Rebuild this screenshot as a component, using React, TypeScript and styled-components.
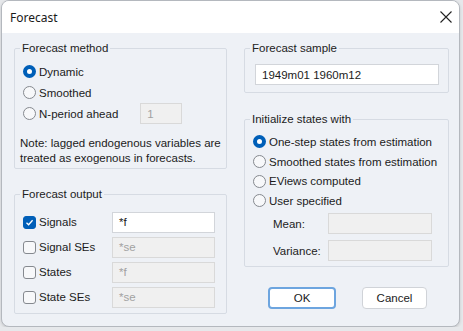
import styled, { createGlobalStyle } from 'styled-components';

const GlobalStyle = createGlobalStyle`
  html, body {
    margin: 0;
    padding: 0;
    background: #e6e8eb;
  }
  body {
    font-family: 'Liberation Sans', Arial, sans-serif;
    font-size: 11.5px;
    color: #1b1b1b;
  }
`;

const RadioOption: React.FC<{ label: string; checked?: boolean }> = ({ label, checked }) => (
  <RadioLabel>
    <RadioDot $checked={checked} />
    <span>{label}</span>
  </RadioLabel>
);

const CheckOption: React.FC<{ label: string; checked?: boolean }> = ({ label, checked }) => (
  <RadioLabel>
    <CheckBox $checked={checked}>
      {checked && (
        <svg width="9" height="9" viewBox="0 0 9 9">
          <path d="M1.5 4.8 L3.6 6.8 L7.6 2.2" fill="none" stroke="#fff" strokeWidth="1.3" />
        </svg>
      )}
    </CheckBox>
    <span>{label}</span>
  </RadioLabel>
);

export default function App() {
  return (
    <>
      <GlobalStyle />
      <Window>
        <TitleBar>
          <Title>Forecast</Title>
          <svg width="12" height="12" viewBox="0 0 12 12">
            <path d="M0.5 0.5 L11.5 11.5 M11.5 0.5 L0.5 11.5" stroke="#222" strokeWidth="1.1" />
          </svg>
        </TitleBar>
        <Body>
          <Column $width={213}>
            <Group $bottom={2}>
              <Legend>Forecast method</Legend>
              <Stack $top={5}>
                <OptionRow><RadioOption label="Dynamic" checked /></OptionRow>
                <OptionRow><RadioOption label="Smoothed" /></OptionRow>
                <OptionRow>
                  <RadioOption label="N-period ahead" />
                  <TextBox $disabled $width={42} $left={22}>1</TextBox>
                </OptionRow>
              </Stack>
              <Note>
                Note: lagged endogenous variables are
                <br />
                treated as exogenous in forecasts.
              </Note>
            </Group>
            <Group $top={18}>
              <Legend>Forecast output</Legend>
              <OutputGrid>
                <CheckOption label="Signals" checked />
                <TextBox $width={103}>*f</TextBox>
                <CheckOption label="Signal SEs" />
                <TextBox $disabled $width={103}>*se</TextBox>
                <CheckOption label="States" />
                <TextBox $disabled $width={103}>*f</TextBox>
                <CheckOption label="State SEs" />
                <TextBox $disabled $width={103}>*se</TextBox>
              </OutputGrid>
            </Group>
          </Column>
          <Column $width={205}>
            <Group>
              <Legend>Forecast sample</Legend>
              <SampleBox>1949m01 1960m12</SampleBox>
            </Group>
            <Group $top={19}>
              <Legend>Initialize states with</Legend>
              <Stack $top={5}>
                <InitRow><RadioOption label="One-step states from estimation" checked /></InitRow>
                <InitRow><RadioOption label="Smoothed states from estimation" /></InitRow>
                <InitRow><RadioOption label="EViews computed" /></InitRow>
                <InitRow><RadioOption label="User specified" /></InitRow>
              </Stack>
              <ParamGrid>
                <ParamLabel>Mean:</ParamLabel>
                <TextBox $disabled $width={104} />
                <ParamLabel>Variance:</ParamLabel>
                <TextBox $disabled $width={104} />
              </ParamGrid>
            </Group>
            <ButtonRow>
              <Button $primary>OK</Button>
              <Button>Cancel</Button>
            </ButtonRow>
          </Column>
        </Body>
      </Window>
    </>
  );
}

const Window = styled.div`
  margin-left: 1px;
  width: 457px;
  height: 325px;
  border: 1px solid #b4b8be;
  border-radius: 8px;
  overflow: hidden;
  background: #eef1f6;
  display: flex;
  flex-direction: column;
  box-shadow: 0 1px 3px rgba(0, 0, 0, 0.15);
`;

const TitleBar = styled.div`
  height: 32px;
  flex: none;
  background: #fff;
  display: flex;
  align-items: center;
  justify-content: space-between;
  padding: 0 7px 0 8px;
`;

const Title = styled.div`
  font-family: 'Noto Sans', 'Liberation Sans', sans-serif;
  font-size: 12px;
  color: #1a1a1a;
`;

const Body = styled.div`
  display: flex;
  align-items: flex-start;
  gap: 17px;
  padding: 8px 0 0 12px;
`;

const Column = styled.div<{ $width: number }>`
  width: ${(p) => p.$width}px;
  display: flex;
  flex-direction: column;
`;

const Group = styled.fieldset<{ $top?: number; $bottom?: number }>`
  margin: ${(p) => p.$top ?? 0}px 0 0;
  padding: 0 9px ${(p) => p.$bottom ?? 5}px 8px;
  border: 1px solid #d6dbe3;
  border-radius: 2px;
  min-width: 0;
`;

const Legend = styled.legend`
  padding: 0 2px;
  margin-left: -3px;
  line-height: 15px;
  color: #222;
`;

const Stack = styled.div<{ $top: number }>`
  display: flex;
  flex-direction: column;
  padding-top: ${(p) => p.$top}px;
`;

const OptionRow = styled.div`
  height: 21px;
  display: flex;
  align-items: center;
`;

const InitRow = styled.div`
  height: 19.7px;
  display: flex;
  align-items: center;
`;

const RadioLabel = styled.label`
  display: flex;
  align-items: center;
  gap: 3px;
  white-space: nowrap;
`;

const RadioDot = styled.span<{ $checked?: boolean }>`
  box-sizing: border-box;
  width: 13px;
  height: 13px;
  border-radius: 50%;
  flex: none;
  border: ${(p) => (p.$checked ? '4px solid #005fb8' : '1px solid #85898f')};
  background: ${(p) => (p.$checked ? '#fff' : '#f7f8fa')};
`;

const CheckBox = styled.span<{ $checked?: boolean }>`
  box-sizing: border-box;
  width: 13px;
  height: 13px;
  border-radius: 3px;
  flex: none;
  display: flex;
  align-items: center;
  justify-content: center;
  border: 1px solid ${(p) => (p.$checked ? '#005fb8' : '#85898f')};
  background: ${(p) => (p.$checked ? '#005fb8' : '#f7f8fa')};
`;

const TextBox = styled.div<{ $disabled?: boolean; $width: number; $left?: number }>`
  box-sizing: border-box;
  width: ${(p) => p.$width}px;
  height: 21px;
  margin-left: ${(p) => p.$left ?? 0}px;
  padding: 0 6px;
  display: flex;
  align-items: center;
  border: 1px solid ${(p) => (p.$disabled ? '#d9d9d9' : '#d2d5da')};
  background: ${(p) => (p.$disabled ? '#f0f0f0' : '#fff')};
  color: ${(p) => (p.$disabled ? '#a2a2a2' : '#1b1b1b')};
`;

const Note = styled.div`
  margin-top: 12px;
  margin-left: -3px;
  margin-right: -12px;
  white-space: nowrap;
  line-height: 15px;
`;

const OutputGrid = styled.div`
  display: grid;
  grid-template-columns: 89px 103px;
  grid-auto-rows: 22px;
  row-gap: 3px;
  align-items: center;
  padding-top: 9px;
`;

const SampleBox = styled(TextBox).attrs({ $width: 184 })`
  margin: 8px 0 2px 2px;
`;

const ParamGrid = styled.div`
  display: grid;
  grid-template-columns: 55px 104px;
  grid-auto-rows: 20px;
  row-gap: 7px;
  align-items: center;
  padding: 3px 0 0 20px;
`;

const ParamLabel = styled.div`
  color: #222;
`;

const ButtonRow = styled.div`
  display: flex;
  gap: 26px;
  margin: 20px 0 0 24px;
`;

const Button = styled.div<{ $primary?: boolean }>`
  box-sizing: border-box;
  width: ${(p) => (p.$primary ? 68 : 65)}px;
  height: 22px;
  display: flex;
  align-items: center;
  justify-content: center;
  background: #fff;
  border-radius: 4px;
  border: ${(p) => (p.$primary ? '2px solid #6da5df' : '1px solid #d0d3d8')};
`;
